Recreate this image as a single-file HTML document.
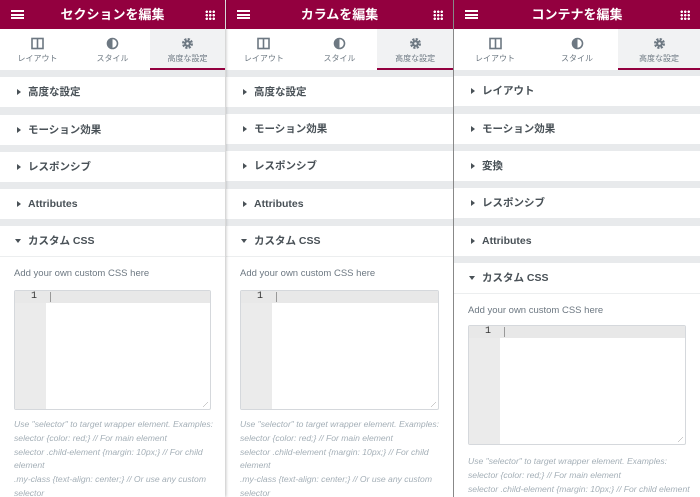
<!DOCTYPE html>
<html><head><meta charset="utf-8"><style>
*{box-sizing:border-box;margin:0;padding:0}
body{width:700px;height:497px;overflow:hidden;background:#fff;font-family:"Liberation Sans","Noto Sans CJK JP",sans-serif;position:relative}
.p{position:absolute;top:0;height:497px;background:#e8eaec;overflow:hidden}
.hd{height:29px;background:#93003f;color:#fff;font-size:13px;font-weight:bold;text-align:center;line-height:29px;position:relative}
.hd .m{position:absolute;left:11px;top:10px;width:13px;height:9px;border-top:2px solid #fff;border-bottom:2px solid #fff}
.hd .m:after{content:"";position:absolute;left:0;right:0;top:1.5px;border-top:2px solid #fff}
.hd .g{position:absolute;right:10px;top:10px;width:10px;height:10px;background:
radial-gradient(circle,#fff 1.3px,transparent 1.4px) 0 0/3.5px 3.5px}
.tabs{height:41px;background:#fff;display:flex}
.tab{flex:1;text-align:center;font-size:8px;color:#6d7882;padding-top:8px;position:relative}
.tab.a{background:#f1f2f3;border-bottom:2px solid #93003f}
.ic{height:13px;margin:0 auto 3px;display:block}
.row{position:absolute;left:0;right:0;height:30px;background:#fff;font-size:10.5px;font-weight:bold;color:#495157;line-height:30px;padding-left:28px}
.row:before{content:"";position:absolute;left:17px;top:12px;border-left:4px solid #495157;border-top:3px solid transparent;border-bottom:3px solid transparent}
.row.o:before{left:15px;top:13px;border-top:4px solid #495157;border-left:3px solid transparent;border-right:3px solid transparent;border-bottom:0}
.body{position:absolute;left:0;right:0;bottom:0;background:#fff;border-top:1px solid #eceeef}
.add{position:absolute;left:14px;font-size:9.5px;color:#6d7882}
.ed{position:absolute;left:14px;right:14px;border:1px solid #d5d8dc;background:#fff;border-radius:2px;overflow:hidden}
.gut{position:absolute;left:0;top:0;bottom:0;width:31px;background:#ebebeb}
.l1{position:absolute;left:0;right:0;top:0;height:12px;background:#e8e8e8;font-family:"Liberation Mono",monospace;font-size:10px;line-height:12px;color:#333}
.l1 span{display:inline-block;width:22px;text-align:right}
.l1 i{position:absolute;left:35px;top:1px;height:10px;border-left:1px solid #999}
.help{position:absolute;left:14px;right:10px;font-size:8.6px;font-style:italic;color:#a4afb7;line-height:13.8px}
.rs{position:absolute;right:2px;bottom:2px;width:5px;height:5px;background:linear-gradient(135deg,transparent 45%,#999 50%,transparent 55%)}
</style></head><body>

<div class="p" style="left:0;width:225px;box-shadow:1px 0 3px rgba(0,0,0,.25);z-index:3">
<div class="hd"><div class="m"></div>セクションを編集<div class="g"></div></div>
<div class="tabs">
<div class="tab"><svg class="ic" viewBox="0 0 13 13" width="13"><rect x="1" y="1.5" width="11" height="10" fill="none" stroke="#6d7882" stroke-width="1.6"/><line x1="6.5" y1="1.5" x2="6.5" y2="11.5" stroke="#6d7882" stroke-width="1.6"/></svg>レイアウト</div>
<div class="tab"><svg class="ic" viewBox="0 0 13 13" width="13"><circle cx="6.5" cy="6.5" r="5" fill="none" stroke="#6d7882" stroke-width="1.6"/><path d="M6.5 1.5A5 5 0 0 0 6.5 11.5Z" fill="#6d7882"/></svg>スタイル</div>
<div class="tab a"><svg class="ic" viewBox="0 0 13 13" width="13"><circle cx="6.5" cy="6.5" r="4" fill="none" stroke="#6d7882" stroke-width="3" stroke-dasharray="2 1.15"/><circle cx="6.5" cy="6.5" r="3.3" fill="#6d7882"/><circle cx="6.5" cy="6.5" r="1.3" fill="#f1f2f3"/></svg>高度な設定</div>
</div>
<div class="row" style="top:77px">高度な設定</div>
<div class="row" style="top:115px">モーション効果</div>
<div class="row" style="top:152px">レスポンシブ</div>
<div class="row" style="top:189px">Attributes</div>
<div class="row o" style="top:226px">カスタム CSS</div>
<div class="body" style="top:256px">
<div class="add" style="top:11px">Add your own custom CSS here</div>
<div class="ed" style="top:33px;height:120px"><div class="gut"></div><div class="l1"><span>1</span><i></i></div><div class="rs"></div></div>
<div class="help" style="top:161px">Use "selector" to target wrapper element. Examples:<br>selector {color: red;} // For main element<br>selector .child-element {margin: 10px;} // For child element<br>.my-class {text-align: center;} // Or use any custom selector</div>
</div>
</div>

<div class="p" style="left:226px;width:227px;z-index:2">
<div class="hd"><div class="m"></div>カラムを編集<div class="g"></div></div>
<div class="tabs">
<div class="tab"><svg class="ic" viewBox="0 0 13 13" width="13"><rect x="1" y="1.5" width="11" height="10" fill="none" stroke="#6d7882" stroke-width="1.6"/><line x1="6.5" y1="1.5" x2="6.5" y2="11.5" stroke="#6d7882" stroke-width="1.6"/></svg>レイアウト</div>
<div class="tab"><svg class="ic" viewBox="0 0 13 13" width="13"><circle cx="6.5" cy="6.5" r="5" fill="none" stroke="#6d7882" stroke-width="1.6"/><path d="M6.5 1.5A5 5 0 0 0 6.5 11.5Z" fill="#6d7882"/></svg>スタイル</div>
<div class="tab a"><svg class="ic" viewBox="0 0 13 13" width="13"><circle cx="6.5" cy="6.5" r="4" fill="none" stroke="#6d7882" stroke-width="3" stroke-dasharray="2 1.15"/><circle cx="6.5" cy="6.5" r="3.3" fill="#6d7882"/><circle cx="6.5" cy="6.5" r="1.3" fill="#f1f2f3"/></svg>高度な設定</div>
</div>
<div class="row" style="top:77px">高度な設定</div>
<div class="row" style="top:114px">モーション効果</div>
<div class="row" style="top:151px">レスポンシブ</div>
<div class="row" style="top:189px">Attributes</div>
<div class="row o" style="top:226px">カスタム CSS</div>
<div class="body" style="top:256px">
<div class="add" style="top:11px">Add your own custom CSS here</div>
<div class="ed" style="top:33px;height:120px"><div class="gut"></div><div class="l1"><span>1</span><i></i></div><div class="rs"></div></div>
<div class="help" style="top:161px">Use "selector" to target wrapper element. Examples:<br>selector {color: red;} // For main element<br>selector .child-element {margin: 10px;} // For child element<br>.my-class {text-align: center;} // Or use any custom selector</div>
</div>
</div>

<div class="p" style="left:453px;width:247px;border-left:1px solid #888;z-index:1">
<div class="hd"><div class="m"></div>コンテナを編集<div class="g"></div></div>
<div class="tabs">
<div class="tab"><svg class="ic" viewBox="0 0 13 13" width="13"><rect x="1" y="1.5" width="11" height="10" fill="none" stroke="#6d7882" stroke-width="1.6"/><line x1="6.5" y1="1.5" x2="6.5" y2="11.5" stroke="#6d7882" stroke-width="1.6"/></svg>レイアウト</div>
<div class="tab"><svg class="ic" viewBox="0 0 13 13" width="13"><circle cx="6.5" cy="6.5" r="5" fill="none" stroke="#6d7882" stroke-width="1.6"/><path d="M6.5 1.5A5 5 0 0 0 6.5 11.5Z" fill="#6d7882"/></svg>スタイル</div>
<div class="tab a"><svg class="ic" viewBox="0 0 13 13" width="13"><circle cx="6.5" cy="6.5" r="4" fill="none" stroke="#6d7882" stroke-width="3" stroke-dasharray="2 1.15"/><circle cx="6.5" cy="6.5" r="3.3" fill="#6d7882"/><circle cx="6.5" cy="6.5" r="1.3" fill="#f1f2f3"/></svg>高度な設定</div>
</div>
<div class="row" style="top:76px">レイアウト</div>
<div class="row" style="top:114px">モーション効果</div>
<div class="row" style="top:151px">変換</div>
<div class="row" style="top:188px">レスポンシブ</div>
<div class="row" style="top:226px">Attributes</div>
<div class="row o" style="top:263px">カスタム CSS</div>
<div class="body" style="top:293px">
<div class="add" style="top:11px">Add your own custom CSS here</div>
<div class="ed" style="top:31px;height:120px"><div class="gut"></div><div class="l1"><span>1</span><i></i></div><div class="rs"></div></div>
<div class="help" style="top:161px">Use "selector" to target wrapper element. Examples:<br>selector {color: red;} // For main element<br>selector .child-element {margin: 10px;} // For child element<br>.my-class {text-align: center;} // Or use any custom selector</div>
</div>
</div>
</body></html>
